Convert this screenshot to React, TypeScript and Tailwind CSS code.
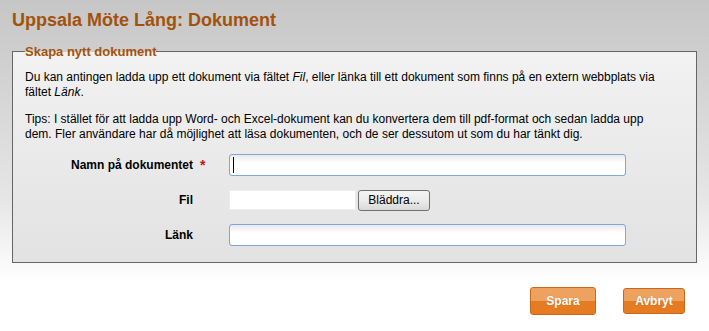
import { useState } from 'react';

const inputClass =
  'h-[22px] w-[397px] rounded-[3px] border border-[#7fa7d9] bg-gradient-to-b from-[#e9e9e9] via-white via-40% to-white px-1 text-[12px] text-black outline-none';

export default function App() {
  const [name, setName] = useState('');
  const [link, setLink] = useState('');

  return (
    <div className="min-h-[331px] bg-gradient-to-b from-[#c6c6c6] via-[#e6e6e6] via-60% to-white to-85% px-3 pb-4 pt-[9px] font-['Liberation_Sans',Arial,sans-serif] text-[12px] text-black">
      <h1 className="text-[18px] font-bold leading-[22px] text-[#a3520b]">Uppsala Möte Lång: Dokument</h1>

      <fieldset className="mt-[13px] border border-[#666666] bg-gradient-to-b from-[#f2f2f2] to-[#e2e2e2] px-3 pb-[16px]">
        <legend className="text-[13px] font-bold leading-[15px] text-[#a3520b]">Skapa nytt dokument</legend>

        <p className="mt-[11px] leading-[15px]">
          Du kan antingen ladda upp ett dokument via fältet <i>Fil</i>, eller länka till ett dokument som finns på en
          extern webbplats via fältet <i>Länk</i>.
        </p>
        <p className="mt-[12px] leading-[15px]">
          Tips: I stället för att ladda upp Word- och Excel-dokument kan du konvertera dem till pdf-format och sedan
          ladda upp
          <br />
          dem. Fler användare har då möjlighet att läsa dokumenten, och de ser dessutom ut som du har tänkt dig.
        </p>

        <div className="mt-[12px] flex flex-col gap-[13px]">
          <div className="flex h-[22px] items-center">
            <label htmlFor="doc-name" className="w-[168px] text-right font-bold">
              Namn på dokumentet
            </label>
            <span className="w-[36px] pl-[7px] text-[14px] font-bold leading-none text-[#cc1111]">*</span>
            <div className="relative">
              <input id="doc-name" type="text" value={name} onChange={(e) => setName(e.target.value)} className={inputClass} />
              {name === '' && <span className="absolute left-[4px] top-[3px] h-[16px] w-px bg-black" />}
            </div>
          </div>

          <div className="flex h-[22px] items-center">
            <span className="w-[168px] text-right font-bold">Fil</span>
            <span className="w-[36px]" />
            <div className="flex items-center gap-[2px]">
              <div className="h-[20px] w-[127px] border border-[#ededed] bg-white" />
              <button
                type="button"
                className="h-[21px] w-[72px] rounded-[3px] border border-[#707070] bg-gradient-to-b from-[#f4f4f4] via-[#ebebeb] via-50% to-[#d9d9d9] text-[12px] leading-none text-black"
              >
                Bläddra...
              </button>
            </div>
          </div>

          <div className="flex h-[22px] items-center">
            <label htmlFor="doc-link" className="w-[168px] text-right font-bold">
              Länk
            </label>
            <span className="w-[36px]" />
            <input id="doc-link" type="text" value={link} onChange={(e) => setLink(e.target.value)} className={inputClass} />
          </div>
        </div>
      </fieldset>

      <div className="mt-[24px] flex items-center justify-end gap-[27px] pr-[12px]">
        <button
          type="button"
          className="h-[28px] w-[66px] rounded-[3px] border border-[#c9661a] bg-gradient-to-b from-[#eda25f] from-50% to-[#e57c22] to-50% text-[12px] font-bold text-white [text-shadow:0_0_1px_rgba(120,50,0,0.4)]"
        >
          Spara
        </button>
        <button
          type="button"
          className="h-[26px] w-[62px] rounded-[3px] border border-[#c9661a] bg-gradient-to-b from-[#eda25f] from-50% to-[#e57c22] to-50% text-[12px] font-bold text-white [text-shadow:0_0_1px_rgba(120,50,0,0.4)]"
        >
          Avbryt
        </button>
      </div>
    </div>
  );
}
